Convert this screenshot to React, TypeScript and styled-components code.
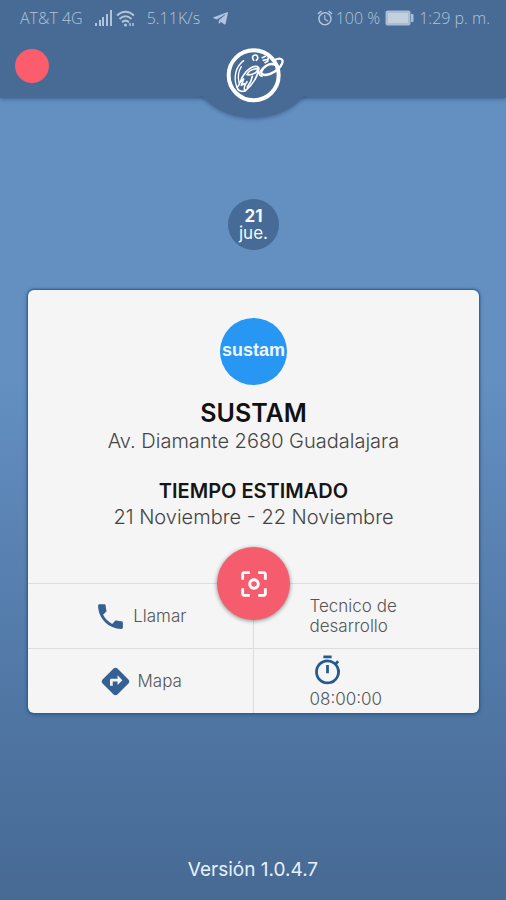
import React from 'react';
import styled, { createGlobalStyle } from 'styled-components';
import {
  MdAlarm,
  MdCenterFocusWeak,
  MdDirections,
  MdOutlineTimer,
  MdPhone,
} from 'react-icons/md';
import { FaTelegramPlane } from 'react-icons/fa';

const GlobalStyle = createGlobalStyle`
  *, *::before, *::after { box-sizing: border-box; }
  body {
    margin: 0;
    font-family: Inter, sans-serif;
    color: #555;
    background: #476b95;
  }
  h1, h2, p { margin: 0; }
`;

const Screen = styled.div`
  display: flex;
  flex-direction: column;
  min-height: 100vh;
  background: linear-gradient(#638fc1 0%, #638fc1 42%, #4f75a3 80%, #466a93 100%);
`;

const Header = styled.header`
  position: relative;
  display: flex;
  flex-direction: column;
  height: 98px;
  background: #476b94;
  box-shadow: 0 1px 4px rgba(40, 70, 110, 0.6);
`;

const Notch = styled.div`
  position: absolute;
  left: 50%;
  bottom: -20px;
  width: 118px;
  height: 90px;
  margin-left: -59px;
  border-radius: 50%;
  background: #476b94;
  box-shadow: 0 2px 3px rgba(40, 70, 110, 0.35);
  clip-path: inset(68px -4px -6px -4px);
`;

const StatusBar = styled.div`
  position: relative;
  display: flex;
  flex-shrink: 0;
  justify-content: space-between;
  align-items: center;
  height: 36px;
  padding: 0 16px 0 20px;
  font: 300 16px 'Open Sans', sans-serif;
  color: #b0c4dc;
`;

const StatusGroup = styled.div<{ $gap: number }>`
  display: flex;
  align-items: center;
  gap: ${(p) => p.$gap}px;
  white-space: nowrap;
`;

const Toolbar = styled.div`
  position: relative;
  display: grid;
  flex-shrink: 0;
  grid-template-columns: 1fr auto 1fr;
  align-items: start;
  padding: 11px 15px 0;
`;

const RecordButton = styled.button`
  width: 34px;
  height: 34px;
  margin-top: 2px;
  padding: 0;
  border: 0;
  border-radius: 50%;
  background: #fb5d6c;
`;

const Main = styled.main`
  display: flex;
  flex: 1;
  flex-direction: column;
  align-items: center;
  padding: 101px 27px 0 28px;
`;

const DayBadge = styled.div`
  display: flex;
  flex-direction: column;
  align-items: center;
  justify-content: center;
  width: 51px;
  height: 51px;
  border-radius: 50%;
  background: #456b96;
  color: #f4f7fb;
  font-size: 17px;
  line-height: 17px;
`;

const Card = styled.section`
  display: flex;
  flex-direction: column;
  width: 100%;
  margin-top: 40px;
  border-radius: 6px;
  background: #f5f5f5;
  box-shadow: 0 0 2px 1px #275f91, 0 1px 4px rgba(25, 65, 110, 0.6);
`;

const Summary = styled.div`
  display: flex;
  flex-direction: column;
  align-items: center;
  padding: 28px 8px 0;
  text-align: center;
`;

const CompanyLogo = styled.div`
  display: flex;
  align-items: center;
  justify-content: center;
  width: 67px;
  height: 67px;
  padding-bottom: 2px;
  border-radius: 50%;
  background: #2896f3;
  color: #eef7ff;
  font: bold 18px 'Liberation Sans', sans-serif;
`;

const Company = styled.h1`
  margin-top: 13px;
  color: #111;
  font-size: 25px;
  font-weight: 600;
  line-height: 30px;
`;

const Subtitle = styled.h2`
  margin-top: 24px;
  color: #161616;
  font-size: 20px;
  font-weight: 600;
  line-height: 26px;
`;

const Detail = styled.p`
  color: #444;
  font-size: 20px;
  font-weight: 300;
  line-height: 26px;
`;

const ScanRow = styled.div`
  display: flex;
  justify-content: center;
  margin-top: 17px;
  margin-bottom: -37px;
`;

const ScanButton = styled.button`
  position: relative;
  display: flex;
  align-items: center;
  justify-content: center;
  width: 73px;
  height: 73px;
  padding: 0;
  border: 0;
  border-radius: 50%;
  background: #f55d6f;
  color: #fff;
  font-size: 34px;
  box-shadow: 0 1px 4px rgba(0, 0, 0, 0.45);
`;

const Actions = styled.div`
  display: grid;
  grid-template-columns: 1fr 1fr;
  grid-auto-rows: 65px;
`;

const cell = `
  display: flex;
  border: 0;
  border-top: 1px solid #dcdcdc;
  background: none;
  color: #555;
  font-family: inherit;
  font-size: 17px;
  font-weight: 300;
  line-height: 20px;
`;

const ActionButton = styled.button`
  ${cell}
  align-items: center;
  justify-content: center;
  gap: 6px;
  padding: 0;
  border-right: 1px solid #dcdcdc;

  svg {
    color: #365f92;
    font-size: 33px;
  }
`;

const InfoCell = styled.div`
  ${cell}
  flex-direction: column;
  align-items: flex-start;
  justify-content: center;
  padding-left: 56px;
  padding-right: 24px;

  svg {
    margin-left: 1px;
    margin-bottom: 2px;
    color: #235b90;
    font-size: 33px;
  }
`;

const Version = styled.footer`
  padding-bottom: 17px;
  color: #e8f1fb;
  font-size: 19px;
  line-height: 26px;
  text-align: center;
`;

const SignalIcon = () => (
  <svg width="17" height="16" viewBox="0 0 17 16" fill="currentColor" aria-hidden="true">
    <rect x="0" y="13" width="2" height="3" />
    <rect x="4" y="10" width="2" height="6" />
    <rect x="7" y="7" width="2" height="9" />
    <rect x="11" y="4" width="2" height="12" />
    <rect x="15" y="0" width="2" height="16" />
  </svg>
);

const WifiIcon = () => (
  <svg width="19" height="17" viewBox="0 0 19 17" fill="none" stroke="currentColor" strokeWidth="2" aria-hidden="true">
    <path d="M1 5.500Q9.500-2 18 5.500M3.500 9Q9.500 3.500 15.500 9M6 12.200Q9.500 9 13 12.200" />
    <circle cx="9.500" cy="15" r="1.500" fill="currentColor" stroke="none" />
    <path d="M14 13v3M17 13v3" strokeWidth="1.500" />
  </svg>
);

const BatteryIcon = () => (
  <svg width="29" height="16" viewBox="0 0 29 16" aria-hidden="true">
    <rect x="0.500" y="0.500" width="25" height="15" rx="2" fill="#a9bdd6" />
    <rect x="3" y="3" width="20" height="10" fill="#c5d0df" />
    <path d="M26 4h1.500q1 0 1 1v6q0 1-1 1H26z" fill="#a9bdd6" />
  </svg>
);

const BrandLogo = () => (
  <svg
    width="64"
    height="57"
    viewBox="0 17 192 171"
    fill="none"
    stroke="#fff"
    strokeLinecap="round"
    strokeLinejoin="round"
    role="img"
    aria-label="Logo"
  >
    <circle cx="98" cy="102" r="75" strokeWidth="12" />
    <path
      strokeWidth="7"
      d="M160 57C176 48 190 52 183 67C175 85 150 101 132 101C114 100 120 83 136 73C146 67 156 67 164 71"
    />
    <path
      strokeWidth="4"
      d="M68 58C44 75 36 109 48 138M61 76C51 92 50 108 54 124"
    />
    <path
      strokeWidth="5"
      d="M48 138C51 148 60 152 72 149C68 141 68 135 78 121M48 138C58 130 57 118 66 104C76 86 94 72 110 76C116 88 98 103 78 100C82 90 94 83 108 82M114 80C110 104 94 131 72 149M59 121L68 113L61 132L70 127M94 105C92 119 86 128 79 137M126 82C113 90 111 101 123 105"
    />
    <path
      strokeWidth="5"
      d="M98 57C91 48 96 38 107 42M107 42C112 48 111 54 106 57M124 49L133 45M127 57L136 55M142 49L140 60L132 64"
    />
  </svg>
);

export default function App() {
  return (
    <Screen>
      <GlobalStyle />
      <Header>
        <Notch />
        <StatusBar>
          <StatusGroup $gap={12}>
            <span>AT&amp;T 4G</span>
            <StatusGroup $gap={4}>
              <SignalIcon />
              <WifiIcon />
            </StatusGroup>
            <span>5.11K/s</span>
            <FaTelegramPlane size={17} aria-hidden />
          </StatusGroup>
          <StatusGroup $gap={5}>
            <StatusGroup $gap={2}>
              <MdAlarm size={18} aria-hidden />
              <span>100 %</span>
            </StatusGroup>
            <BatteryIcon />
            <span>1:29 p. m.</span>
          </StatusGroup>
        </StatusBar>
        <Toolbar>
          <RecordButton type="button" aria-label="Estado" />
          <BrandLogo />
        </Toolbar>
      </Header>

      <Main>
        <DayBadge>
          <strong>21</strong>
          <span>jue.</span>
        </DayBadge>

        <Card>
          <Summary>
            <CompanyLogo>sustam</CompanyLogo>
            <Company>SUSTAM</Company>
            <Detail>Av. Diamante 2680 Guadalajara</Detail>
            <Subtitle>TIEMPO ESTIMADO</Subtitle>
            <Detail>21 Noviembre - 22 Noviembre</Detail>
          </Summary>
          <ScanRow>
            <ScanButton type="button" aria-label="Escanear">
              <MdCenterFocusWeak />
            </ScanButton>
          </ScanRow>
          <Actions>
            <ActionButton type="button">
              <MdPhone />
              Llamar
            </ActionButton>
            <InfoCell>
              Tecnico de desarrollo
            </InfoCell>
            <ActionButton type="button">
              <MdDirections />
              Mapa
            </ActionButton>
            <InfoCell>
              <MdOutlineTimer />
              <span>08:00:00</span>
            </InfoCell>
          </Actions>
        </Card>
      </Main>

      <Version>Versión 1.0.4.7</Version>
    </Screen>
  );
}
